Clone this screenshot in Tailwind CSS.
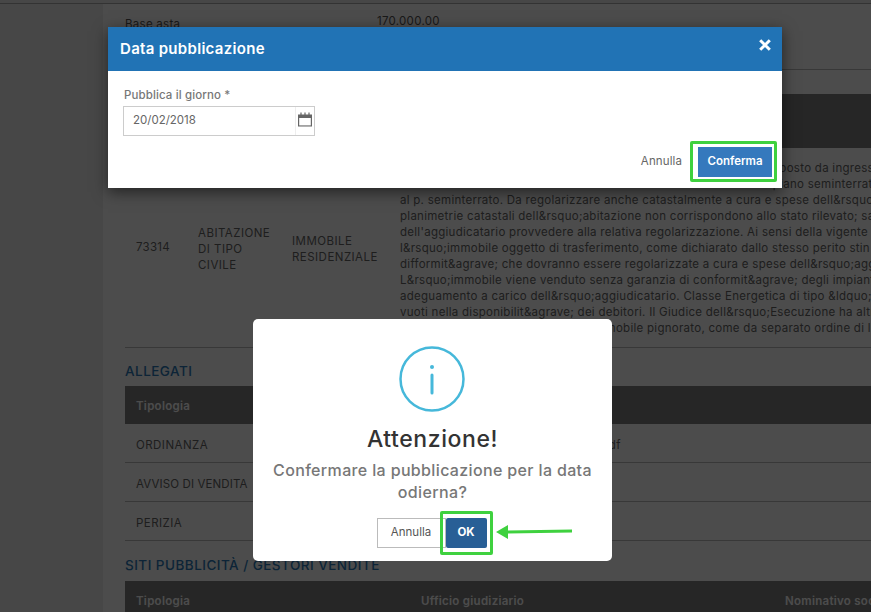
<!DOCTYPE html>
<html lang="it">
<head>
	<meta charset="UTF-8" />
	<title>Data pubblicazione</title>
	<script src="https://cdn.jsdelivr.net/npm/@tailwindcss/browser@4"></script>
</head>
<body class="font-['Inter',sans-serif] text-[#666]">
	<div class="relative h-[612px] w-[871px] overflow-hidden bg-[#eeeeee]">

		<div class="h-[4px] border-b border-[#aaa]"></div>

		<!-- pagina sotto le modali -->
		<main class="ml-[103px] h-[608px] w-[768px] overflow-hidden bg-white pl-[22px] text-[11.5px] tracking-[0.024em]">
			<div class="flex h-[65px] pt-[9px] text-[#555]">
				<p class="w-[252px] pt-[3px]">Base asta</p>
				<p>170.000.00</p>
			</div>
			<div class="h-[25px] border-t border-[#bbb]"></div>

			<div class="flex h-[54px] w-[800px] bg-[#7f7f7f]"></div>
			<div class="flex h-[200px] w-[800px] items-center border-b border-[#bbb] uppercase">
				<p class="w-[73px] pl-[11px] normal-case">73314</p>
				<p class="w-[94px] pt-[2px] leading-[16px] tracking-[0.04em]">Abitazione<br />di tipo<br />civile</p>
				<p class="w-[108px] pt-[2px] leading-[16px] tracking-[0.04em]">Immobile<br />residenziale</p>
				<div class="whitespace-nowrap normal-case leading-[16px]">
					<p class="pl-[355px]">composto da ingresso</p>
					<p class="pl-[352px]">del piano seminterrato</p>
					<p>al p. seminterrato. Da regolarizzare anche catastalmente a cura e spese dell&amp;rsquo;</p>
					<p>planimetrie catastali dell&amp;rsquo;abitazione non corrispondono allo stato rilevato; sa</p>
					<p>dell'aggiudicatario provvedere alla relativa regolarizzazione. Ai sensi della vigente n</p>
					<p>l&amp;rsquo;immobile oggetto di trasferimento, come dichiarato dallo stesso perito stin</p>
					<p>difformit&amp;agrave; che dovranno essere regolarizzate a cura e spese dell&amp;rsquo;aggi</p>
					<p>L&amp;rsquo;immobile viene venduto senza garanzia di conformit&amp;agrave; degli impiant</p>
					<p>adeguamento a carico dell&amp;rsquo;aggiudicatario. Classe Energetica di tipo &amp;ldquo;</p>
					<p>vuoti nella disponibilit&amp;agrave; dei debitori. Il Giudice dell&amp;rsquo;Esecuzione ha altr</p>
					<p class="pl-[168px]">dell'immobile pignorato, come da separato ordine di lib</p>
				</div>
			</div>

			<h2 class="mt-[14px] text-[13.5px] leading-[18px] font-medium tracking-[0.035em] text-[#2c7ab8] uppercase">Allegati</h2>
			<div class="mt-[6px] flex h-[38px] w-[800px] items-center bg-[#7f7f7f] pt-[3px] pl-[11px] font-semibold text-white">Tipologia</div>
			<div class="flex h-[39px] w-[800px] items-center border-b border-[#bbb] pt-[5px] pl-[11px] tracking-[0.04em]">
				<p class="w-[180px] uppercase">Ordinanza</p>
				<p class="w-[305px] text-right">ordinanza.pdf</p>
			</div>
			<div class="flex h-[39px] w-[800px] items-center border-b border-[#bbb] pt-[5px] pl-[11px] tracking-[0.01em] uppercase">Avviso di vendita</div>
			<div class="flex h-[39px] w-[800px] items-center border-b border-[#bbb] pt-[5px] pl-[11px] tracking-[0.04em] uppercase">Perizia</div>

			<h2 class="mt-[15px] text-[13.5px] leading-[18px] font-medium tracking-[0.035em] text-[#2c7ab8] uppercase">Siti pubblicità / gestori vendite</h2>
			<div class="mt-[7px] flex h-[38px] w-[800px] items-center bg-[#7f7f7f] pt-[3px] pl-[11px] font-semibold text-white">
				<p class="w-[285px]">Tipologia</p>
				<p class="w-[364px]">Ufficio giudiziario</p>
				<p>Nominativo società</p>
			</div>
		</main>

		<div class="absolute inset-0 bg-black/70"></div>

		<!-- modale data -->
		<section class="absolute top-[27px] left-[108px] h-[161px] w-[674px] bg-white shadow-[0_4px_14px_rgba(0,0,0,0.55)]">
			<header class="flex h-[44px] items-center justify-between bg-[#2173b5] pr-[11px] pl-[12px] text-white">
				<h1 class="pt-[1px] text-[15px] font-semibold tracking-[0.02em]">Data pubblicazione</h1>
				<svg class="mb-[8px] h-[12px] w-[12px]" viewBox="0 0 12 12" fill="none" stroke="currentColor" stroke-width="3"><path d="M1.2 1.2 10.8 10.8M10.8 1.2 1.2 10.8" /></svg>
			</header>
			<div class="px-[16px] pt-[17px]">
				<p class="text-[11.5px] leading-[14px] font-medium tracking-[0.01em] text-[#777]">Pubblica il giorno *</p>
				<div class="mt-[4px] ml-[-1px] flex h-[30px] w-[192px] border border-[#ccc] text-[11.5px] text-[#666]">
					<p class="flex flex-1 items-center pl-[9px]">20/02/2018</p>
					<div class="flex w-[19px] items-center justify-center border-l border-[#eee]">
						<svg class="mb-[2px] h-[16px] w-[16px]" viewBox="0 0 16 16" fill="none">
							<rect x="1" y="2.5" width="14" height="12" fill="#666" />
							<rect x="2.2" y="6" width="11.6" height="7.4" fill="#fff" />
							<path d="M4 .5v3M8 .5v3M12 .5v3" stroke="#666" stroke-width="1.2" />
						</svg>
					</div>
				</div>
			</div>
			<div class="absolute top-[120px] right-[10px] flex items-center">
				<button class="mr-[16px] text-[11.5px] tracking-[0.01em] text-[#666]">Annulla</button>
				<div class="relative">
					<button class="h-[30px] w-[74px] bg-[#3579bd] text-[11.5px] font-semibold text-white">Conferma</button>
					<div class="absolute -top-[6px] -right-[5px] -bottom-[5px] -left-[8px] rounded-[2px] border-[3px] border-[#3fd13f]"></div>
				</div>
			</div>
		</section>

		<!-- modale conferma -->
		<section class="absolute top-[319px] left-[253px] flex h-[242px] w-[359px] flex-col items-center rounded-[5px] bg-white">
			<svg class="mt-[27px] mr-[2px] h-[66px] w-[66px]" viewBox="0 0 66 66" fill="none" stroke="#46b8da">
				<circle cx="33" cy="33" r="31.5" stroke-width="2.5" />
				<circle cx="33" cy="21" r="2" fill="#46b8da" stroke="none" />
				<path d="M33 29v18" stroke-width="3" stroke-linecap="round" />
			</svg>
			<h1 class="mt-[12px] text-[23px] leading-[30px] font-medium tracking-[0.025em] text-[#333]">Attenzione!</h1>
			<p class="mt-[5px] w-[340px] text-center text-[16px] leading-[22px] font-medium tracking-[0.022em] text-[#777]">Confermare la pubblicazione per la data odierna?</p>
			<div class="relative mt-[15px] ml-[-2px] flex">
				<button class="h-[30px] w-[69px] border border-[#bbb] text-[11.5px] text-[#555]">Annulla</button>
				<div class="relative">
					<button class="h-[30px] w-[41px] rounded-[2px] bg-[#285f96] text-[11.5px] font-bold text-white">OK</button>
					<div class="absolute -inset-x-[6px] -top-[7px] -bottom-[7px] rounded-[2px] border-[3px] border-[#3fd13f]"></div>
					<svg class="absolute top-[6px] left-[50px] h-[16px] w-[78px]" viewBox="0 0 78 16" fill="#3fd13f">
						<path d="M0 8 12 1v5.5l64-1v3l-64 1V15z" />
					</svg>
				</div>
			</div>
		</section>
	</div>
</body>
</html>
